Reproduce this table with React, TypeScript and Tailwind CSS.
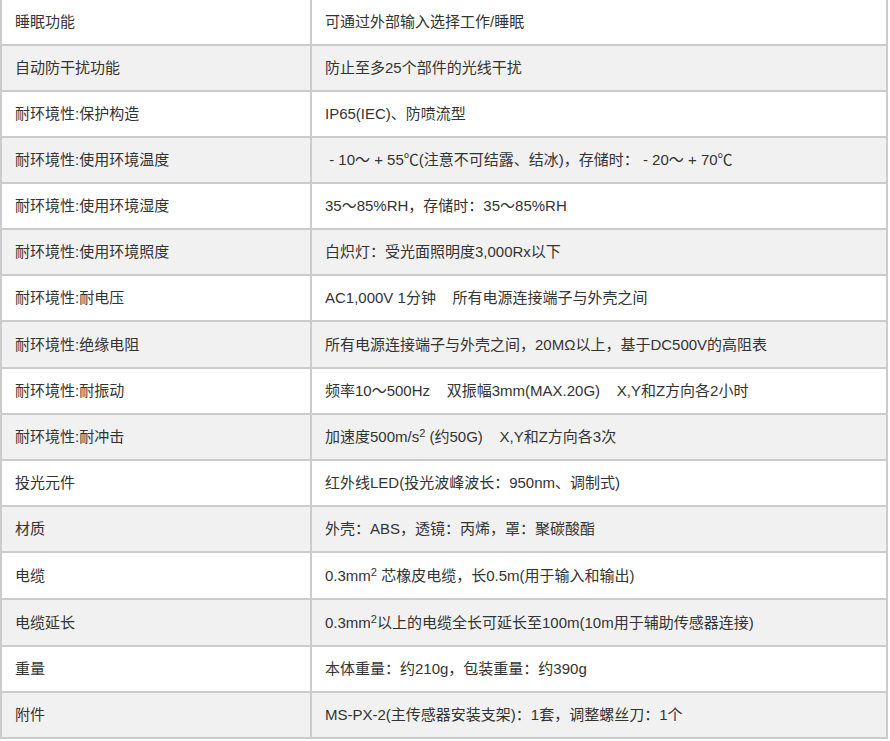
import React from 'react';

type Row = { label: string; value: React.ReactNode; tall?: boolean };

const rows: Row[] = [
  { label: '睡眠功能', value: '可通过外部输入选择工作/睡眠' },
  { label: '自动防干扰功能', value: '防止至多25个部件的光线干扰' },
  { label: '耐环境性:保护构造', value: 'IP65(IEC)、防喷流型' },
  { label: '耐环境性:使用环境温度', value: '\u00a0- 10～ + 55℃(注意不可结露、结冰)，存储时： - 20～ + 70℃' },
  { label: '耐环境性:使用环境湿度', value: '35～85%RH，存储时：35～85%RH' },
  { label: '耐环境性:使用环境照度', value: '白炽灯：受光面照明度3,000Rx以下' },
  { label: '耐环境性:耐电压', value: 'AC1,000V 1分钟\u00a0\u00a0\u00a0\u00a0所有电源连接端子与外壳之间' },
  { label: '耐环境性:绝缘电阻', value: '所有电源连接端子与外壳之间，20MΩ以上，基于DC500V的高阻表', tall: true },
  { label: '耐环境性:耐振动', value: '频率10～500Hz\u00a0\u00a0\u00a0\u00a0双振幅3mm(MAX.20G)\u00a0\u00a0\u00a0\u00a0X,Y和Z方向各2小时' },
  {
    label: '耐环境性:耐冲击',
    value: (
      <>
        加速度500m/s<sup>2</sup> (约50G)&nbsp;&nbsp;&nbsp;&nbsp;X,Y和Z方向各3次
      </>
    ),
  },
  { label: '投光元件', value: '红外线LED(投光波峰波长：950nm、调制式)' },
  { label: '材质', value: '外壳：ABS，透镜：丙烯，罩：聚碳酸酯' },
  {
    label: '电缆',
    tall: true,
    value: (
      <>
        0.3mm<sup>2</sup> 芯橡皮电缆，长0.5m(用于输入和输出)
      </>
    ),
  },
  {
    label: '电缆延长',
    tall: true,
    value: (
      <>
        0.3mm<sup>2</sup>以上的电缆全长可延长至100m(10m用于辅助传感器连接)
      </>
    ),
  },
  { label: '重量', value: '本体重量：约210g，包装重量：约390g' },
  { label: '附件', value: 'MS-PX-2(主传感器安装支架)：1套，调整螺丝刀：1个' },
];

const App = () => {
  return (
    <div className="bg-white w-[890px] h-[741px] overflow-hidden">
      <table
        className="-mt-[2px] w-[888px] border border-[#cccccc] border-separate border-spacing-0 text-[15px] leading-[22px] text-[#333333]"
        style={{ fontFamily: '"Liberation Sans", Arial, "Noto Sans CJK SC", sans-serif' }}
      >
        <tbody>
          {rows.map((r, i) => (
            <tr key={r.label} className={i % 2 === 1 ? 'bg-[#f1f1f1]' : 'bg-white'}>
              <td
                className={
                  'w-[310px] border border-[#cccccc] px-[13px] align-middle ' +
                  (r.tall ? 'pt-[12px] pb-[11px]' : 'py-[11px]')
                }
              >
                {r.label}
              </td>
              <td
                className={
                  'border border-[#cccccc] px-[13px] align-middle [&_sup]:text-[11px] ' +
                  (r.tall ? 'pt-[12px] pb-[11px]' : 'py-[11px]')
                }
              >
                {r.value}
              </td>
            </tr>
          ))}
        </tbody>
      </table>
    </div>
  );
};

export default App;
